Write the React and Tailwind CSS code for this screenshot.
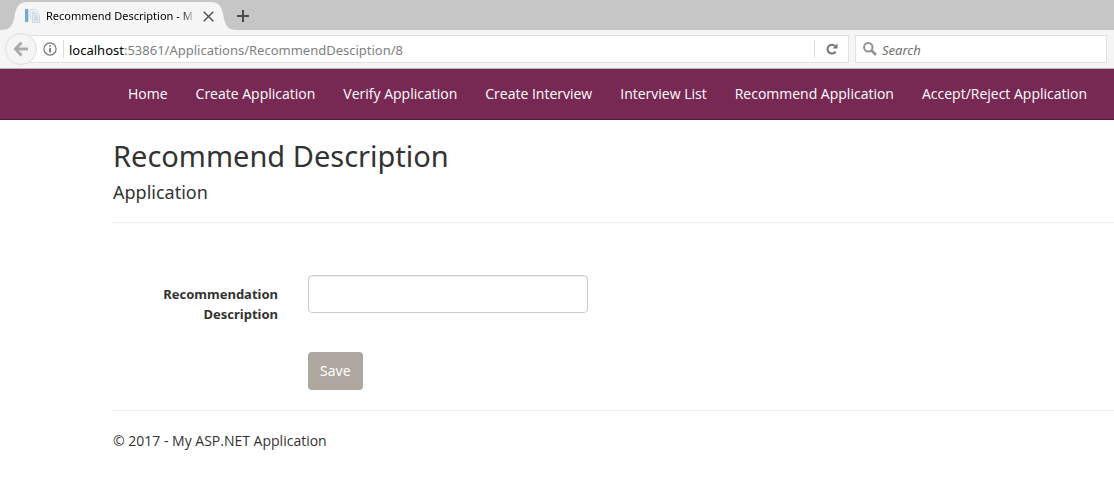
const links = [
  "Home",
  "Create Application",
  "Verify Application",
  "Create Interview",
  "Interview List",
  "Recommend Application",
  "Accept/Reject Application",
];

function TabStrip() {
  return (
    <div className="flex h-[30px] bg-[#c6c6c6]">
      <div className="relative flex w-[237px] items-center pt-0.5 pl-6">
        <svg className="absolute top-0 left-0" width="237" height="30" aria-hidden="true">
          <path d="M0 30C9 30 12 27 14 19C16 7 18 2 28 2H210C220 2 222 7 224 19C226 27 229 30 237 30Z" fill="#f5f5f5" />
        </svg>
        <svg className="relative shrink-0" width="16" height="16" viewBox="0 0 16 16" aria-hidden="true">
          <path d="M1 1h3v13H1z" fill="#70acd3" />
          <path d="M4 1h1v13H4z" fill="#c4dded" />
          <path d="M6.500 1.500h6l1 1v8h-7z" fill="#f4f7fa" stroke="#d4dde5" />
          <path d="M8.500 5.500h5l2 2v7h-7z" fill="#e8eef4" stroke="#cbd6e0" />
          <path d="M8 4h3M10 8h3M10 10h4M10 12h4" stroke="#b9c7d3" />
        </svg>
        <span className="relative ml-1.5 w-[150px] bg-linear-to-r from-black from-90% to-transparent bg-clip-text text-[11px] whitespace-nowrap text-transparent">
          Recommend Description - M
        </span>
        <button type="button" aria-label="Close tab" className="relative ml-0.5 flex size-5 shrink-0 items-center justify-center">
          <svg width="11" height="11" viewBox="0 0 11 11" fill="none" stroke="#4d4d4d" strokeWidth="1.400">
            <path d="M0.700 0.700L10.300 10.300M10.300 0.700L0.700 10.300" />
          </svg>
        </button>
      </div>
      <button type="button" aria-label="New tab" className="flex w-3 items-center justify-center pt-0.5">
        <svg width="12" height="12" viewBox="0 0 12 12" className="shrink-0" fill="none" stroke="#4a4a4a" strokeWidth="2">
          <path d="M6 0V12M0 6H12" />
        </svg>
      </button>
    </div>
  );
}

function Toolbar() {
  return (
    <div className="flex h-[39px] items-center border-b border-[#b5b5b5] bg-[#f5f5f5] pr-[7px] pl-[5px]">
      <button
        type="button"
        aria-label="Back"
        className="z-10 flex size-8 shrink-0 items-center justify-center rounded-full border border-[#dedede] bg-[#f5f5f5]"
      >
        <svg width="16" height="16" viewBox="0 0 16 16" fill="none" stroke="#acacac" strokeWidth="3">
          <path d="M8.500 1.500L2.500 8L8.500 14.500M3 8H15" />
        </svg>
      </button>
      <div className="-ml-4 flex h-7 flex-1 items-center border border-[#e1e1e1] bg-white pl-[21px]">
        <svg className="shrink-0" width="14" height="14" viewBox="0 0 15 15" aria-hidden="true">
          <circle cx="7.500" cy="7.500" r="6.500" fill="none" stroke="#777" strokeWidth="1.300" />
          <path d="M6.700 6.300h1.800v5H6.700zM6.700 3.500h1.800v1.700H6.700z" fill="#707070" />
        </svg>
        <div className="ml-1.5 h-[18px] w-px bg-[#dedede]" />
        <div className="ml-[5px] flex-1 pt-0.5 text-[13px] text-[#808080]">
          <span className="text-black">localhost</span>:53861/Applications/RecommendDesciption/8
        </div>
        <div className="h-[18px] w-px bg-[#dedede]" />
        <button type="button" aria-label="Reload" className="flex w-[33px] items-center justify-center">
          <svg width="12" height="12" viewBox="0 0 12 12" aria-hidden="true">
            <path d="M9 3A4.400 4.400 0 1 0 9.600 8.600" fill="none" stroke="#757575" strokeWidth="2" />
            <path d="M11.500 0.500V5.500H6.500Z" fill="#757575" />
          </svg>
        </button>
      </div>
      <label className="ml-1.5 flex h-7 w-[252px] items-center border border-[#e1e1e1] bg-white pl-[7px]">
        <svg className="shrink-0" width="14" height="14" viewBox="0 0 14 14" fill="none" stroke="#929292" aria-hidden="true">
          <circle cx="5.300" cy="5.300" r="4.200" strokeWidth="2" />
          <path d="M8.500 8.500L13 13" strokeWidth="2.600" />
        </svg>
        <input
          type="search"
          aria-label="Search"
          placeholder="Search"
          className="ml-[5px] min-w-0 flex-1 pt-0.5 text-[13px] italic outline-none placeholder:text-[#707070]"
        />
      </label>
    </div>
  );
}

export default function App() {
  return (
    <div className="min-h-screen overflow-x-hidden bg-white font-['Noto_Sans','Open_Sans',sans-serif] text-sm leading-5 text-[#333]">
      <header>
        <TabStrip />
        <Toolbar />
      </header>
      <nav className="border-b border-[#4f1a38] bg-[#772953] pl-32">
        <ul className="flex gap-7 font-['Open_Sans','Noto_Sans',sans-serif] text-sm whitespace-nowrap text-white">
          {links.map((label) => (
            <li key={label}>
              <a href="#" className="block py-[15px]">{label}</a>
            </li>
          ))}
        </ul>
      </nav>
      <main className="pl-[113px]">
        <h2 className="pt-5 text-[29px] leading-8">Recommend Description</h2>
        <h4 className="pt-2.5 text-lg leading-5">Application</h4>
        <hr className="mt-5 border-[#eee]" />
        <form className="pt-[52px]" onSubmit={(e) => e.preventDefault()}>
          <div className="flex items-start gap-[30px]">
            <label htmlFor="description" className="w-[165px] pt-[9px] text-right text-[13px] font-bold">
              Recommendation
              <br />
              Description
            </label>
            <input
              id="description"
              type="text"
              className="h-[38px] w-[280px] rounded border border-[#ccc] bg-white px-3 shadow-[inset_0_1px_1px_rgba(0,0,0,0.075)] outline-none"
            />
          </div>
          <button type="submit" className="mt-7 ml-[195px] h-[38px] rounded bg-[#aea79f] px-3 text-white">
            Save
          </button>
        </form>
        <hr className="mt-5 border-[#eee]" />
        <footer className="pt-5">
          <p className="font-['Open_Sans','Noto_Sans',sans-serif] text-sm">© 2017 - My ASP.NET Application</p>
        </footer>
      </main>
    </div>
  );
}
